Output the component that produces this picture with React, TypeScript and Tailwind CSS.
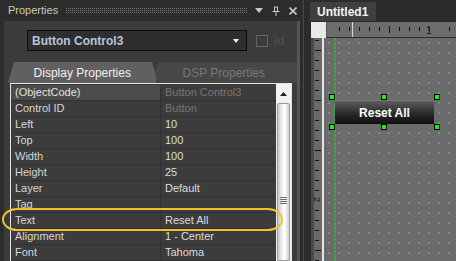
import React from "react";

const rows: [string, string, boolean?][] = [
  ["(ObjectCode)", "Button Control3", true],
  ["Control ID", "Button", true],
  ["Left", "10"],
  ["Top", "100"],
  ["Width", "100"],
  ["Height", "25"],
  ["Layer", "Default"],
  ["Tag", ""],
  ["Text", "Reset All"],
  ["Alignment", "1 - Center"],
  ["Font", "Tahoma"],
];

const HeaderIcons = () => (
  <div className="flex items-center gap-[9px] pr-[6px]">
    <svg width="8" height="5" viewBox="0 0 8 5">
      <polygon points="0,0 8,0 4,5" fill="#c8c8c8" />
    </svg>
    <svg width="8" height="10" viewBox="0 0 8 10">
      <path d="M0.5 5.5h7M2 1h4M2.5 1v4.5M5.5 1v4.5M4 5.5v4.5" stroke="#c8c8c8" strokeWidth="1" fill="none" />
    </svg>
    <svg width="8" height="8" viewBox="0 0 8 8">
      <path d="M0.5 0.5l7 7M7.5 0.5l-7 7" stroke="#c8c8c8" strokeWidth="1.6" />
    </svg>
  </div>
);

const PropertyGrid = () => (
  <div className="ml-[6px] mr-[5px] flex flex-1 border border-[#e4e4e4] border-b-0">
    <div className="flex flex-1 flex-col pt-[1px]">
      {rows.map(([label, value, dim], i) => (
        <div key={label} className="flex h-[16px] border-b border-[#303030] text-[11px] leading-[15px]">
          <div
            className={`w-[149px] pl-[4px] ${
              i === 0 ? "bg-[#4b4b4b] text-[#e2e2e2]" : "bg-[#3c3c3c] text-[#d6d6d6]"
            }`}
          >
            {label}
          </div>
          <div
            className={`flex-1 border-l border-[#333] bg-[#3c3c3c] pl-[4px] ${
              dim ? "text-[#777]" : "text-[#dcdcdc]"
            }`}
          >
            {value}
          </div>
        </div>
      ))}
    </div>
    <div className="flex w-[15px] flex-col bg-[#f2f2f2]">
      <div className="flex h-[19px] items-center justify-center">
        <svg width="7" height="4" viewBox="0 0 7 4">
          <polygon points="3.5,0 7,4 0,4" fill="#222" />
        </svg>
      </div>
      <div className="mx-[1px] flex flex-1 flex-col items-center rounded-t-[2px] border border-[#9a9a9a] bg-[linear-gradient(90deg,#c9c9c9,#f7f7f7_45%,#ffffff_60%,#cfcfcf)] pt-[93px]">
        <div className="flex flex-col gap-[1px]">
          <div className="h-[1px] w-[7px] bg-[#707070]" />
          <div className="h-[1px] w-[7px] bg-[#707070]" />
          <div className="h-[1px] w-[7px] bg-[#707070]" />
          <div className="h-[1px] w-[7px] bg-[#707070]" />
        </div>
      </div>
    </div>
  </div>
);

const PropertiesPanel = () => (
  <div className="relative flex w-[303px] flex-col bg-[#2c2c2c]">
    <div className="flex h-[21px] items-center pl-[8px] text-[11px] text-[#cbcbb8]">
      <span>Properties</span>
      <svg className="mx-[8px] flex-1" height="5">
        <defs>
          <pattern id="grip" width="2" height="2" patternUnits="userSpaceOnUse">
            <rect width="1" height="1" fill="#7c7c7c" />
          </pattern>
        </defs>
        <rect width="100%" height="5" fill="url(#grip)" />
      </svg>
      <HeaderIcons />
    </div>
    <div className="ml-[4px] mr-[3px] flex flex-1 flex-col border-r-[3px] border-[#555] bg-[#3b3b3b]">
      <div className="mt-[9px] flex h-[21px] items-center">
        <div className="ml-[23px] flex h-[21px] w-[220px] items-center justify-between border border-[#0c0c0c] bg-[#2e2e2e] pl-[4px] pr-[7px]">
          <span className="text-[12px] font-bold text-[#b6c6da]">Button Control3</span>
          <svg width="6" height="4" viewBox="0 0 6 4">
            <polygon points="0,0 6,0 3,4" fill="#f2f2f2" />
          </svg>
        </div>
        <div className="ml-[9px] h-[12px] w-[12px] border border-[#666]" />
        <span className="ml-[6px] text-[12px] font-bold text-[#4c4c4c]">id</span>
      </div>
      <div className="mt-[11px] flex h-[21px]">
        <div className="relative z-10 ml-[4px] flex w-[150px] items-center justify-center bg-[#606060] pt-[1px] text-[12px] text-[#f2f2f2] [clip-path:polygon(6px_0,144px_0,150px_100%,0_100%)]">
          Display Properties
        </div>
        <div className="-ml-[6px] flex w-[148px] items-center justify-center bg-[#474747] pt-[1px] text-[12px] text-[#787878] [clip-path:polygon(8px_0,100%_0,100%_100%,0_100%)]">
          DSP Properties
        </div>
      </div>
      <PropertyGrid />
    </div>
    <div className="absolute left-[2px] top-[208px] h-[23px] w-[281px] rounded-[16px/12px] border-2 border-[#f0c232]" />
  </div>
);

const TopRuler = () => (
  <svg width="130" height="15" className="block">
    <rect width="130" height="15" fill="#6d6d6d" />
    {Array.from({ length: 12 }).map((_, i) => {
      const x = 12 + i * 10;
      if (i === 10) return null;
      const long = i === 5;
      return <rect key={i} x={x} y={long ? 4 : 5} width="1" height={long ? 7 : 4} fill="#111" />;
    })}
    <rect x="25" y="0" width="1" height="15" fill="#d8d8d8" />
    <text x="99" y="12" fontSize="10" fill="#111" fontFamily="Liberation Sans, sans-serif">
      1
    </text>
  </svg>
);

const LeftRuler = () => (
  <svg width="11" height="223" className="block">
    <rect width="11" height="223" fill="#6a6a6a" />
    <rect width="3" height="223" fill="#4a4a4a" />
    {Array.from({ length: 23 }).map((_, i) => {
      const y = 2 + i * 10;
      if (i === 16) return null;
      const long = i === 1 || i === 11 || i === 21 || i === 6;
      return <rect key={i} x="4" y={y} width={long ? 6 : 4} height="1" fill="#111" />;
    })}
    <text fontSize="9" fill="#111" transform="translate(3 159) rotate(90)" fontFamily="Liberation Sans, sans-serif">
      2
    </text>
  </svg>
);

const Handle = ({ className }: { className: string }) => (
  <div className={`absolute h-[6px] w-[6px] border border-black bg-[#00ff00] ${className}`} />
);

const Designer = () => (
  <div className="flex flex-1 flex-col border-l border-[#4a4a4a] bg-[#2b2b2b]">
    <div className="flex h-[21px] items-end pl-[6px]">
      <div className="flex h-[19px] w-[66px] items-center bg-[#3f3f3f] pl-[7px] text-[12px] font-bold text-[#f4f4f4]">
        Untitled1
      </div>
    </div>
    <div className="ml-[7px] mt-[1px] flex flex-1 flex-col overflow-hidden">
      <div className="flex h-[16px]">
        <div className="w-[15px] bg-[#e8e8e8]" />
        <div className="w-[1px] bg-[#555]" />
        <TopRuler />
      </div>
      <div className="flex flex-1">
        <LeftRuler />
        <div className="w-[2px] bg-[#e6e6e6]" />
        <div className="relative flex-1 bg-[#6b6b6b] bg-[radial-gradient(circle,#868686_0.8px,transparent_1.2px)] bg-[length:10px_10px]">
          <svg className="absolute left-[10px] top-0" width="2" height="223">
            <line x1="1" y1="0" x2="1" y2="223" stroke="#1ee01e" strokeWidth="1" strokeDasharray="3 1" />
          </svg>
          <div className="absolute left-[11px] top-[62px] flex h-[24px] w-[99px] items-center justify-center border-t border-[#7a7a7a] bg-[linear-gradient(#5c5c5c,#2a2a2a_55%,#0e0e0e)] text-[12px] font-bold text-white">
            Reset All
          </div>
          <Handle className="left-[5px] top-[56px]" />
          <Handle className="left-[57px] top-[56px]" />
          <Handle className="left-[110px] top-[56px]" />
          <Handle className="left-[5px] top-[86px]" />
          <Handle className="left-[57px] top-[86px]" />
          <Handle className="left-[110px] top-[86px]" />
        </div>
      </div>
    </div>
  </div>
);

export default function App() {
  return (
    <div className="flex h-[261px] w-[456px] overflow-hidden bg-[#2b2b2b] font-['Liberation_Sans','Arial',sans-serif]">
      <PropertiesPanel />
      <Designer />
    </div>
  );
}
